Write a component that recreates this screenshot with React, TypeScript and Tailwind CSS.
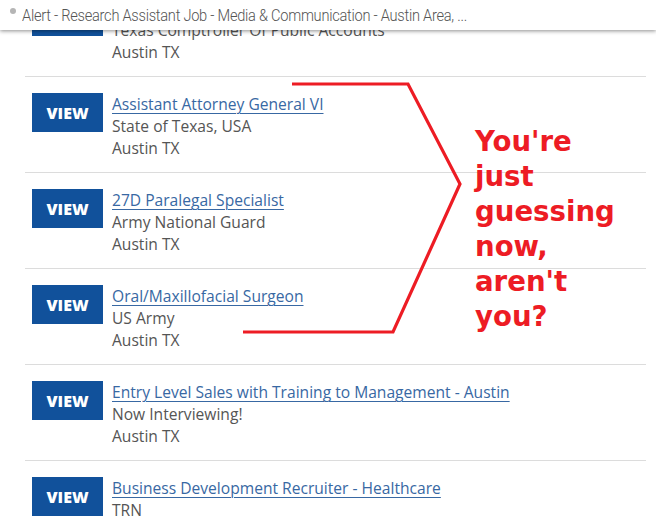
import React from "react";

type Job = { title: string; company: string; loc: string };

const jobs: Job[] = [
  { title: "Research Assistant", company: "Texas Comptroller Of Public Accounts", loc: "Austin TX" },
  { title: "Assistant Attorney General VI", company: "State of Texas, USA", loc: "Austin TX" },
  { title: "27D Paralegal Specialist", company: "Army National Guard", loc: "Austin TX" },
  { title: "Oral/Maxillofacial Surgeon", company: "US Army", loc: "Austin TX" },
  { title: "Entry Level Sales with Training to Management - Austin", company: "Now Interviewing!", loc: "Austin TX" },
  { title: "Business Development Recruiter - Healthcare", company: "TRN", loc: "Austin TX" },
];

function Row({ job }: { job: Job }) {
  return (
    <div className="ml-[25px] mr-[10px] border-b border-[#dcdcdc] pt-[16px] pb-[13px] pl-[7px] flex items-start gap-[9px]">
      <div className="w-[71px] h-[39px] shrink-0 bg-[#11519b] flex items-center justify-center text-white font-extrabold text-[16px] pt-[1px]" style={{ fontFamily: '"Open Sans", sans-serif' }}>
        VIEW
      </div>
      <div className="flex flex-col text-[15.6px] leading-[22px] text-[#555555]" style={{ fontFamily: '"Open Sans", sans-serif' }}>
        <span className="text-[#3868a3] underline underline-offset-[3px] decoration-[1px]">{job.title}</span>
        <span>{job.company}</span>
        <span>{job.loc}</span>
      </div>
    </div>
  );
}

export default function App() {
  return (
    <div className="relative w-[656px] h-[516px] overflow-hidden bg-white">
      <div className="-mt-[19px] flex flex-col">
        {jobs.map((j, i) => (
          <Row key={i} job={j} />
        ))}
      </div>

      <svg className="absolute left-0 top-0 pointer-events-none" width="656" height="516">
        <polyline
          points="292,84 408,84 460,184 393,332 243,332"
          fill="none"
          stroke="#ed1c24"
          strokeWidth="3.2"
          strokeLinejoin="miter"
        />
      </svg>

      <div
        className="absolute left-[475px] top-[124px] text-[#ed1c24] font-bold text-[27.6px] leading-[35px]"
        style={{ fontFamily: '"DejaVu Sans", Verdana, sans-serif' }}
      >
        <div>You're</div>
        <div>just</div>
        <div>guessing</div>
        <div>now,</div>
        <div>aren't</div>
        <div>you?</div>
      </div>

      <div className="absolute left-0 top-0 w-full h-[30px] bg-white shadow-[0_1px_4px_rgba(0,0,0,0.45)] flex items-center">
        <span className="ml-[10px] w-[6px] h-[6px] rounded-full bg-[#b5b5b5] self-start mt-[8px]" />
        <span className="ml-[6px] text-[17px] font-light text-[#555555] leading-[28px] tracking-[-0.3px] whitespace-nowrap origin-left scale-x-[0.86]" style={{ fontFamily: 'Roboto, sans-serif' }}>
          Alert - Research Assistant Job - Media &amp; Communication - Austin Area, ...
        </span>
      </div>
    </div>
  );
}
